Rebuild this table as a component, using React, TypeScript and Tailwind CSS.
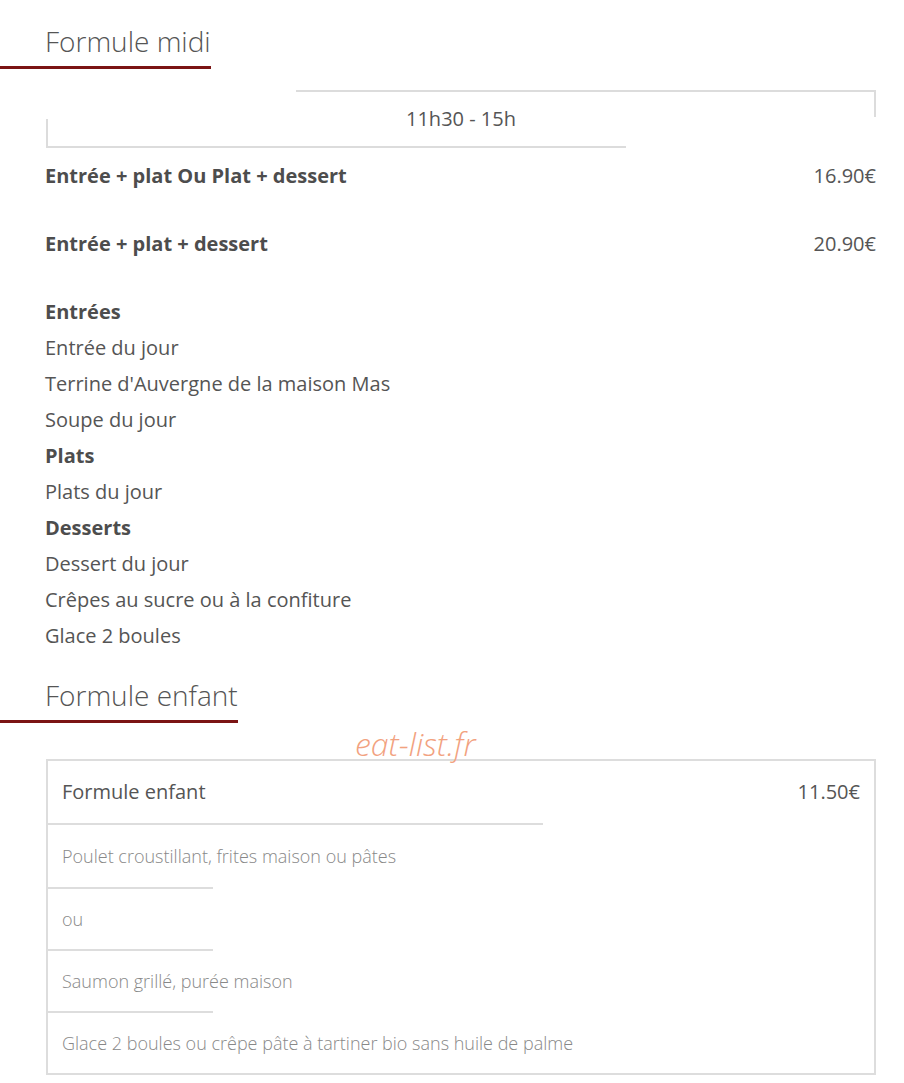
import React from "react";

const MIDI_SECTIONS: { title: string; items: string[] }[] = [
  { title: "Entrées", items: ["Entrée du jour", "Terrine d'Auvergne de la maison Mas", "Soupe du jour"] },
  { title: "Plats", items: ["Plats du jour"] },
  { title: "Desserts", items: ["Dessert du jour", "Crêpes au sucre ou à la confiture", "Glace 2 boules"] },
];

const ENFANT_ROWS = [
  { label: "Poulet croustillant, frites maison ou pâtes", h: "h-[62px]", sep: true },
  { label: "ou", h: "h-[60px]", sep: true },
  { label: "Saumon grillé, purée maison", h: "h-[60px]", sep: true },
  { label: "Glace 2 boules ou crêpe pâte à tartiner bio sans huile de palme", h: "h-[60px]", sep: false },
];

function Title({ children }: { children: React.ReactNode }) {
  return (
    <h2 className="inline-block pl-[45px] pt-[23px] pb-[7px] border-b-[3px] border-[#7b1414] text-[28px] leading-[36px] font-light text-[#555]">
      {children}
    </h2>
  );
}

export default function App() {
  return (
    <div className="relative min-h-screen bg-white font-['Open_Sans',sans-serif] text-[#4d4d4d] pr-[28px]">
      {/* Formule midi */}
      <section>
        <Title>Formule midi</Title>

        <div className="relative ml-[46px] mt-[21px] h-[58px] flex items-center justify-center text-[20px] text-[#555] before:content-[''] before:absolute before:top-0 before:right-0 before:w-[580px] before:h-[27px] before:border-t-2 before:border-r-2 before:border-[#dcdcdc] after:content-[''] after:absolute after:bottom-0 after:left-0 after:w-[580px] after:h-[29px] after:border-b-2 after:border-l-2 after:border-[#dcdcdc]">
          11h30 - 15h
        </div>

        <div className="pl-[45px] mt-[14px] flex flex-col gap-[40px] text-[20px] leading-[28px]">
          <div className="flex justify-between">
            <span className="font-bold">Entrée + plat Ou Plat + dessert</span>
            <span className="text-[#555]">16.90€</span>
          </div>
          <div className="flex justify-between">
            <span className="font-bold">Entrée + plat + dessert</span>
            <span className="text-[#555]">20.90€</span>
          </div>
        </div>

        <div className="pl-[45px] mt-[36px] text-[20px] leading-[36px]">
          {MIDI_SECTIONS.map((s) => (
            <div key={s.title}>
              <div className="font-bold">{s.title}</div>
              {s.items.map((it) => (
                <div key={it} className="text-[#555]">{it}</div>
              ))}
            </div>
          ))}
        </div>
      </section>

      {/* Formule enfant */}
      <section>
        <Title>Formule enfant</Title>

        <div className="ml-[46px] mt-[36px] border-2 border-[#dddddd]">
          <div className="h-[62px] flex items-center justify-between px-[14px] text-[20px] text-[#555]">
            <span>Formule enfant</span>
            <span>11.50€</span>
          </div>
          <div className="w-[495px] h-[2px] bg-[#dddddd]" />
          {ENFANT_ROWS.map((r) => (
            <div key={r.label}>
              <div className={`${r.h} flex items-center px-[14px] text-[18px] font-light text-[#888]`}>{r.label}</div>
              {r.sep && <div className="w-[165px] h-[2px] bg-[#dddddd]" />}
            </div>
          ))}
        </div>
      </section>

      {/* watermark */}
      <div className="absolute left-[355px] top-[724px] text-[32px] leading-[40px] font-light italic text-[#f2a27f] pointer-events-none">
        eat-list.fr
      </div>
    </div>
  );
}
